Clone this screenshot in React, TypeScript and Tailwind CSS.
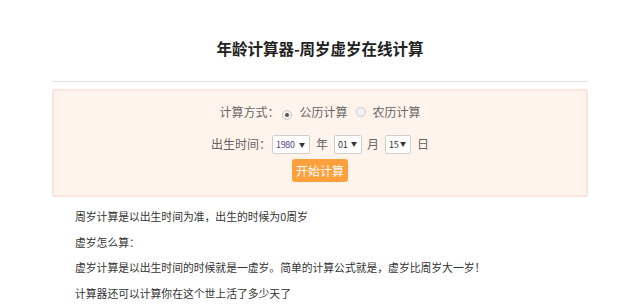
import React from "react";

const FONT = { fontFamily: '"Noto Sans CJK SC", "Noto Sans", sans-serif' };

function Radio({ checked }: { checked: boolean }) {
  return (
    <span className="inline-flex items-center justify-center w-[10px] h-[10px] rounded-full border border-[#c8c8c8] bg-[#f3f3f3]">
      {checked && <span className="w-[4px] h-[4px] rounded-full bg-[#555]" />}
    </span>
  );
}

function Sel({ value, w, color }: { value: string; w: string; color: string }) {
  return (
    <span className={`inline-flex items-center justify-between h-[19px] ${w} bg-white border border-[#cfcfcf] rounded-[2px] pl-[3px] pr-[4px]`}>
      <span className={`text-[9px] leading-none tracking-[-0.3px] ${color}`}>{value}</span>
      <span className="text-[6px] leading-none text-[#333]">▼</span>
    </span>
  );
}

export default function App() {
  return (
    <div className="w-[620px] h-[304px] bg-white overflow-hidden" style={FONT}>
      <div className="ml-[52px] w-[536px]">
        <div className="pt-[37px] h-[81px] text-center text-[15.5px] leading-[22px] font-bold text-[#222]">
          年龄计算器-周岁虚岁在线计算
        </div>
        <div className="h-px bg-[#e4e4e4]" />
        <div className="mt-[7px] h-[108px] border-2 border-[#fde5df] bg-[#fff4ec] rounded-[2px] flex flex-col items-center text-[12px] text-[#666]">
          <div className="mt-[11px] h-[20px] flex items-center">
            <span>计算方式：</span>
            <span className="ml-[3px]"><Radio checked /></span>
            <span className="ml-[7px]">公历计算</span>
            <span className="ml-[8px]"><Radio checked={false} /></span>
            <span className="ml-[7px]">农历计算</span>
          </div>
          <div className="mt-[11px] h-[22px] flex items-center">
            <span>出生时间：</span>
            <span className="ml-[1px]"><Sel value="1980" w="w-[38px]" color="text-[#5b3b86]" /></span>
            <span className="ml-[6px] mr-[6px]">年</span>
            <Sel value="01" w="w-[28px]" color="text-[#333]" />
            <span className="ml-[5px] mr-[6px]">月</span>
            <Sel value="15" w="w-[26px]" color="text-[#333]" />
            <span className="ml-[6px]">日</span>
          </div>
          <button className="mt-[4px] w-[56px] h-[23px] rounded-[3px] bg-[#ffa03c] text-white text-[12px] leading-none flex items-center justify-center">
            开始计算
          </button>
        </div>
        <div className="pl-[23px] pt-[7px] text-[10.8px] text-[#333] leading-[25.6px]">
          <p>周岁计算是以出生时间为准，出生的时候为0周岁</p>
          <p>虚岁怎么算：</p>
          <p>虚岁计算是以出生时间的时候就是一虚岁。简单的计算公式就是，虚岁比周岁大一岁！</p>
          <p>计算器还可以计算你在这个世上活了多少天了</p>
        </div>
      </div>
    </div>
  );
}
